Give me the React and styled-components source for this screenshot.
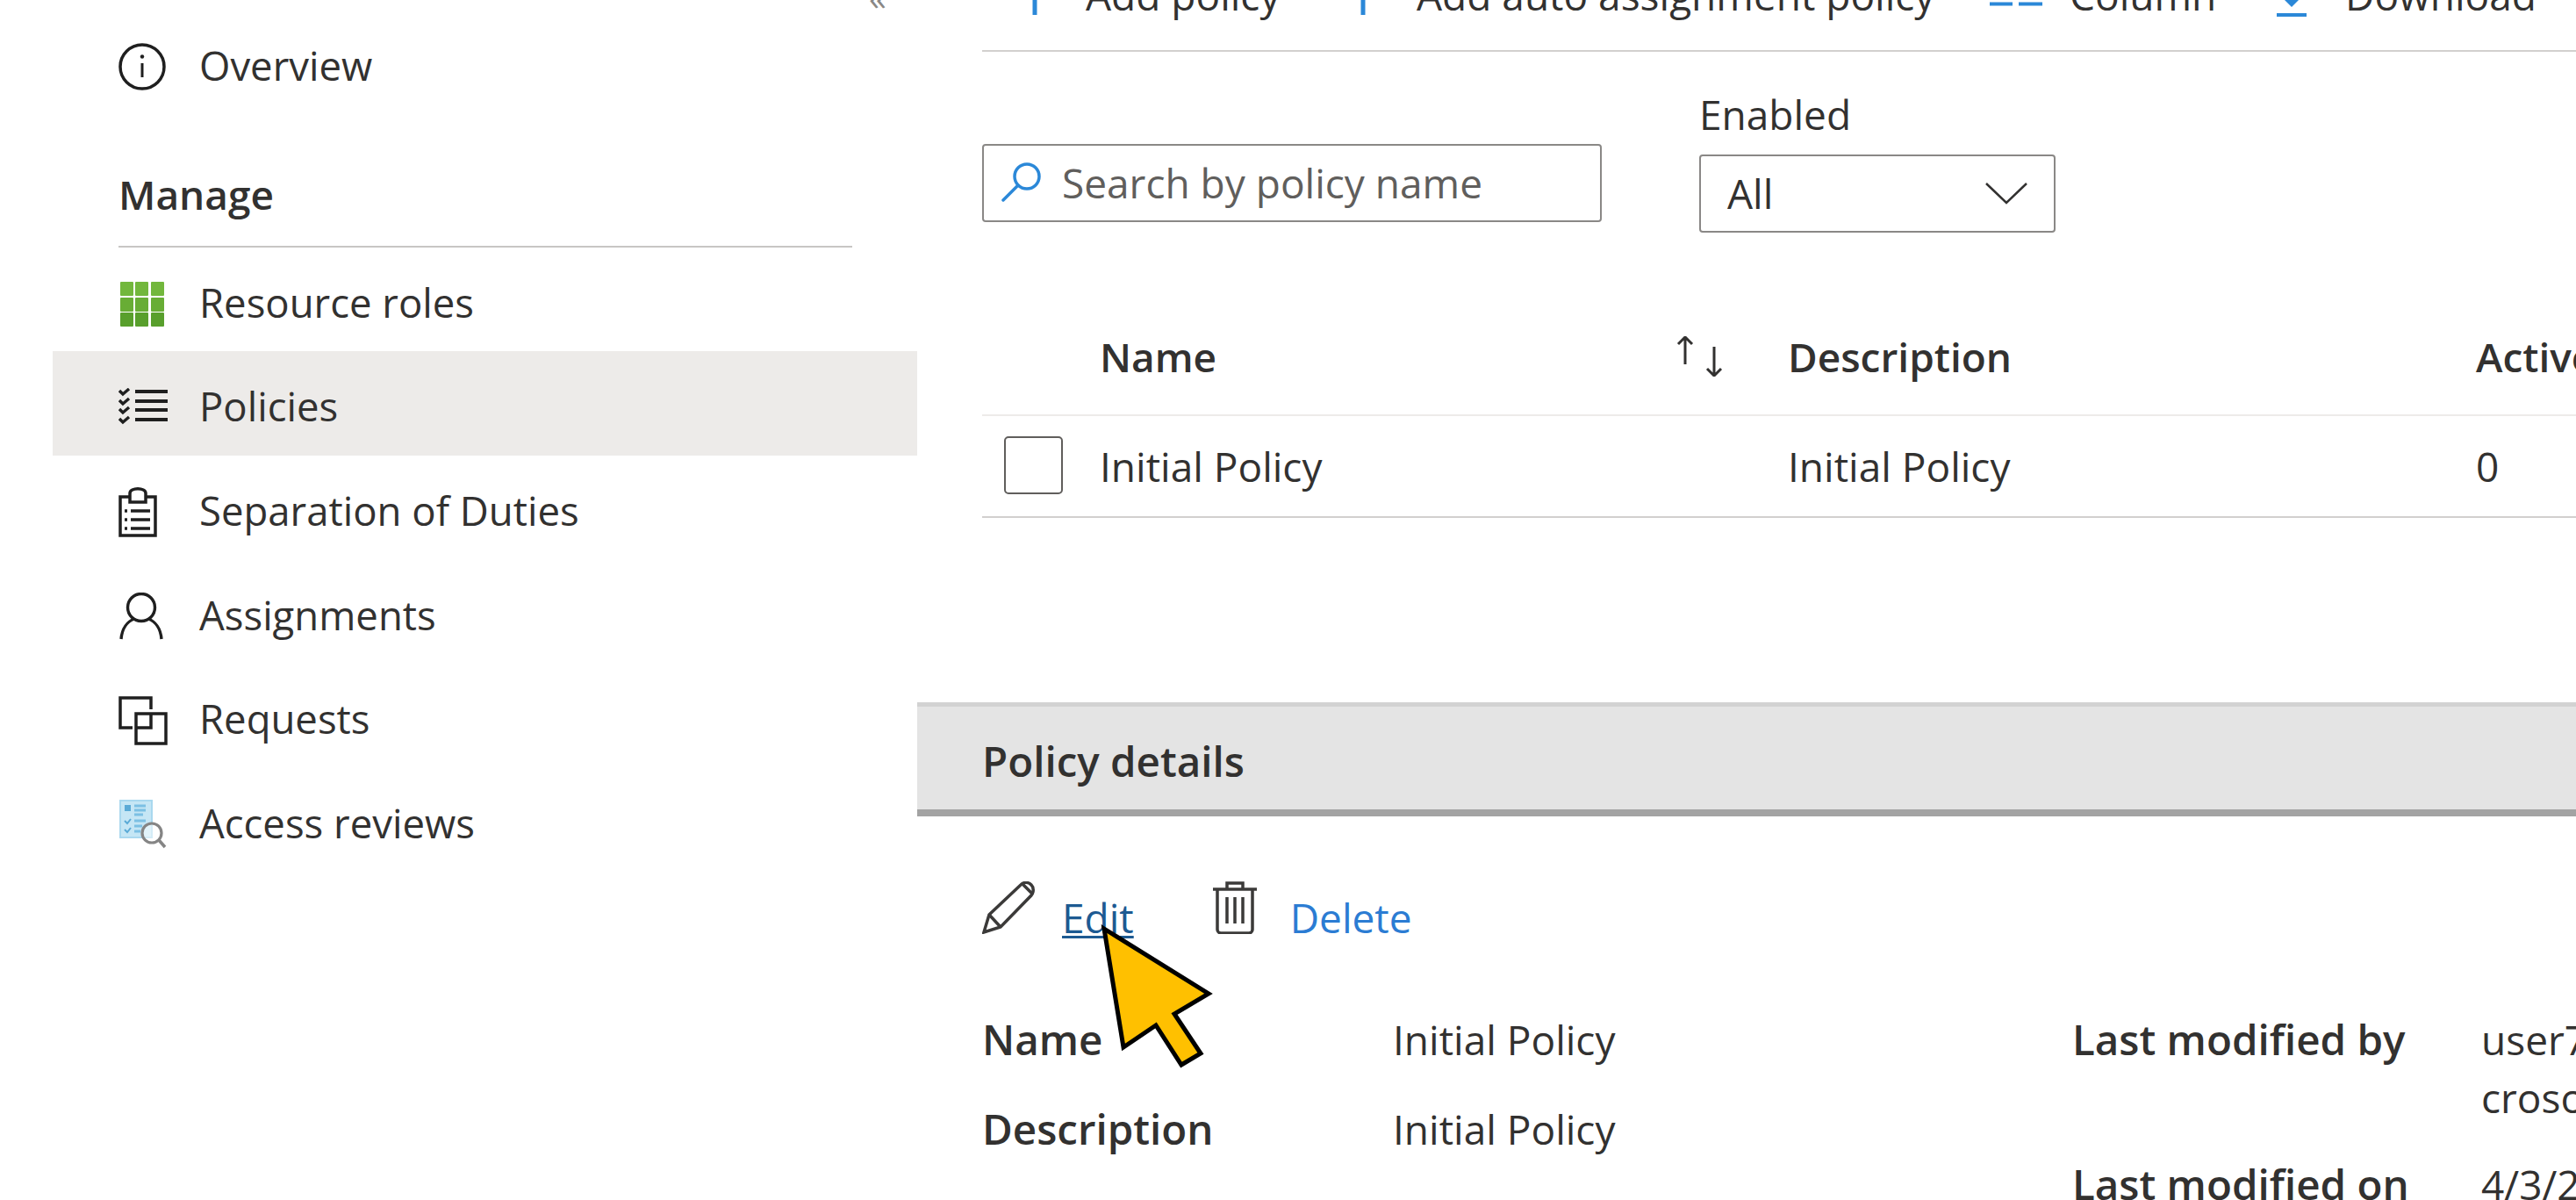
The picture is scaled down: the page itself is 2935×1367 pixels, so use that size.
import React from 'react';
import styled, { createGlobalStyle } from 'styled-components';

const GlobalStyle = createGlobalStyle`
  html, body {
    margin: 0;
    padding: 0;
    background: #fff;
    overflow: hidden;
  }
  * {
    box-sizing: border-box;
  }
  body {
    font-family: "Open Sans", "Noto Sans", "Liberation Sans", sans-serif;
    font-size: 46px;
    color: #323130;
  }
`;

const Page = styled.div`
  display: flex;
  width: 2935px;
  height: 1367px;
  overflow: hidden;
`;

const Sidebar = styled.nav`
  position: relative;
  flex: 0 0 1045px;
  padding: 12px 0 0 60px;
  font-size: 45.5px;
`;

const Collapse = styled.span`
  position: absolute;
  top: -31px;
  left: 990px;
  font-size: 40px;
  color: #8a8886;
`;

const NavItem = styled.div`
  display: flex;
  align-items: center;
  height: 118.7px;
  padding: 5px 0 0 75px;
  background: ${(p) => (p.$active ? '#edebe9' : 'transparent')};
`;

const NavIcon = styled.span`
  display: flex;
  flex: 0 0 92px;
  align-items: center;
  margin-top: 5px;

  svg {
    display: block;
  }
`;

const SectionTitle = styled.div`
  display: flex;
  align-items: center;
  height: 151px;
  margin: 0 74px 0 75px;
  border-bottom: 2px solid #c8c6c4;
  padding-top: 31px;
  font-size: 46px;
  font-weight: 600;
`;

const Main = styled.main`
  flex: 1;
  min-width: 0;
`;

const Content = styled.div`
  padding-left: 74px;
`;

const Toolbar = styled.div`
  display: flex;
  align-items: center;
  height: 129px;
  margin-top: -70px;
  border-bottom: 2px solid #d2d0ce;
  white-space: nowrap;
`;

const ToolButton = styled.span`
  display: flex;
  flex: 0 0 ${(p) => p.$width}px;
  align-items: center;
`;

const ToolIcon = styled.svg`
  flex: 0 0 auto;
  margin-right: ${(p) => p.$gap}px;
  overflow: visible;
`;

const FilterRow = styled.div`
  display: flex;
  align-items: flex-start;
  gap: 111px;
  padding-top: 50px;
`;

const SearchBox = styled.div`
  display: flex;
  align-items: center;
  width: 706px;
  height: 89px;
  margin-top: 55px;
  padding: 0 0 2px 20px;
  border: 2px solid #8a8886;
  border-radius: 4px;
  color: #605e5c;
`;

const SearchIcon = styled.svg`
  flex: 0 0 auto;
  margin-right: 23px;
`;

const FilterField = styled.div`
  display: flex;
  flex-direction: column;
`;

const FieldLabel = styled.label`
  height: 67px;
  line-height: 42px;
`;

const Select = styled.div`
  display: flex;
  align-items: center;
  justify-content: space-between;
  width: 406px;
  height: 89px;
  padding: 0 30px 2px;
  border: 2px solid #8a8886;
  border-radius: 4px;
`;

const Table = styled.div`
  margin-top: 84px;
`;

const TableRow = styled.div`
  display: grid;
  grid-template-columns: 134px 654px 130px 784px 1fr;
  align-items: center;
  height: ${(p) => p.$height}px;
  padding-bottom: ${(p) => (p.$head ? 10 : 0)}px;
  border-bottom: 2px solid ${(p) => p.$line};
  font-weight: ${(p) => (p.$head ? 600 : 400)};
  white-space: nowrap;
`;

const SortIcon = styled.svg`
  margin-left: -1px;
`;

const Checkbox = styled.span`
  display: block;
  width: 67px;
  height: 66px;
  margin: -2px 0 0 25px;
  border: 2px solid #605e5c;
  border-radius: 5px;
`;

const DetailsBar = styled.div`
  display: flex;
  align-items: center;
  height: 130px;
  margin-top: 210px;
  padding: 5px 0 0 74px;
  background: #e4e4e4;
  border-top: 5px solid #d2d2d2;
  border-bottom: 8px solid #a3a3a3;
  font-size: 47.5px;
  font-weight: 600;
`;

const Actions = styled.div`
  display: flex;
  align-items: flex-start;
  padding-top: 74px;
`;

const ActionLink = styled.a`
  margin: ${(p) => p.$margin};
  line-height: 60px;
  color: ${(p) => p.$color};
  text-decoration: ${(p) => (p.$underline ? 'underline' : 'none')};
  text-underline-offset: 3px;
  text-decoration-thickness: 3px;
`;

const ActionIcon = styled.svg`
  flex: 0 0 auto;
`;

const Details = styled.div`
  display: grid;
  grid-template-columns: 468px 774px 466px 1fr;
  margin-top: 76px;
  line-height: 66px;
  white-space: nowrap;
`;

const DetailColumn = styled.div`
  display: flex;
  flex-direction: column;
`;

const DetailLabel = styled.div`
  height: ${(p) => p.$height}px;
  font-size: 47.5px;
  font-weight: 600;
`;

const DetailValue = styled.div`
  height: ${(p) => p.$height}px;
`;

const Pointer = styled.svg`
  position: absolute;
  top: 1050px;
  left: 1250px;
  overflow: visible;
`;

const Icon = ({ children, w = 60, h = 60 }) => (
  <svg width={w} height={h} viewBox={`0 0 ${w} ${h}`} fill="none" stroke="#1f1f1f" strokeWidth="4">
    {children}
  </svg>
);

const InfoIcon = () => (
  <Icon w={54} h={54}>
    <circle cx="27" cy="27" r="25" strokeWidth="3.5" />
    <path d="M27 23v16" strokeWidth="3" />
    <circle cx="27" cy="15.5" r="2.2" fill="#1f1f1f" stroke="none" />
  </Icon>
);

// green grid, three by three
const RolesIcon = () => {
  const cells = [];
  [0, 18, 35].forEach((y) => {
    [2, 19, 37].forEach((x) => {
      cells.push(<rect key={`${x}-${y}`} x={x} y={y} width="15" height="16" rx="1" fill={y === 35 ? '#589f2c' : y === 18 ? '#68ad35' : '#72b73c'} />);
    });
  });
  return (
    <svg width="52" height="51" viewBox="0 0 52 51">
      {cells}
    </svg>
  );
};

const PoliciesIcon = () => (
  <Icon w={56} h={46}>
    <path d="M19 4h37M19 15h37M19 25h37M19 36h37" strokeWidth="4" />
    <path d="M1 3l4 4 7-6M1 14l4 4 7-6M1 24l4 4 7-6M1 35l4 4 7-6" strokeWidth="3.4" />
  </Icon>
);

const SeparationIcon = () => (
  <Icon w={44} h={58}>
    <path d="M13 12H2v44h40V12H31V8c0-7-18-7-18 0v4zM13 12v6h18v-6" strokeWidth="3.5" />
    <path d="M14 28h22M14 38h22M14 48h22" strokeWidth="3.5" />
    <path d="M7 28h3M7 38h3M7 48h3" strokeWidth="3.5" />
  </Icon>
);

const PersonIcon = () => (
  <Icon w={52} h={54}>
    <circle cx="26" cy="17" r="15.5" strokeWidth="3.4" />
    <path d="M3 53c1-12 7-20 15-23M49 53c-1-12-7-20-15-23" strokeWidth="3.4" />
  </Icon>
);

const RequestsIcon = () => (
  <Icon w={56} h={56}>
    <path d="M37 15V2H2v34h14" strokeWidth="3.5" />
    <rect x="20" y="20" width="34" height="34" strokeWidth="3.5" />
    <path d="M37 20v16H20" strokeWidth="3.5" />
  </Icon>
);

const ReviewsIcon = () => (
  <svg width="56" height="56" viewBox="0 0 56 56" fill="none">
    <rect x="1" y="0" width="38" height="44" fill="#a9d8ef" />
    <rect x="3" y="2" width="34" height="40" fill="#c5e6f5" />
    <rect x="7" y="6" width="7" height="7" fill="#5aaad6" />
    <path d="M18 7h13M18 12h13M18 17h10M18 24h13M18 30h9M18 36h7" stroke="#7cc0e4" strokeWidth="3" />
    <path d="M7 24l3 3 4-5M7 34l3 3 4-5" stroke="#5aaad6" strokeWidth="2" />
    <circle cx="38" cy="38" r="11" fill="#fff" fillOpacity="0.5" stroke="#858585" strokeWidth="3.2" />
    <path d="M46 46l7 8" stroke="#858585" strokeWidth="3.5" />
  </svg>
);

const navItems = [
  ['Resource roles', <RolesIcon />],
  ['Policies', <PoliciesIcon />, true],
  ['Separation of Duties', <SeparationIcon />],
  ['Assignments', <PersonIcon />],
  ['Requests', <RequestsIcon />],
  ['Access reviews', <ReviewsIcon />],
];

// only the lower end of the plus is inside the picture
const PlusStem = ({ gap }) => (
  <ToolIcon width="118" height="128" viewBox="0 0 118 128" $gap={gap}>
    <path d="M60 0v87" stroke="#2b88d8" strokeWidth="5" />
  </ToolIcon>
);

const App = () => (
  <>
    <GlobalStyle />
    <Page>
      <Sidebar>
        <Collapse>«</Collapse>
        <NavItem>
          <NavIcon>
            <InfoIcon />
          </NavIcon>
          Overview
        </NavItem>
        <SectionTitle>Manage</SectionTitle>
        {navItems.map(([label, icon, active]) => (
          <NavItem key={label} $active={active}>
            <NavIcon>{icon}</NavIcon>
            {label}
          </NavItem>
        ))}
      </Sidebar>
      <Main>
        <Content>
          <Toolbar>
            <ToolButton $width={374}>
              <PlusStem gap={0} />
              Add policy
            </ToolButton>
            <ToolButton $width={774}>
              <PlusStem gap={3} />
              Add auto assignment policy
            </ToolButton>
            <ToolButton $width={327}>
              <ToolIcon width="60" height="20" viewBox="0 0 60 20" $gap={31}>
                <path d="M0 20.5h26M33 20.5h27" stroke="#2b88d8" strokeWidth="4" />
              </ToolIcon>
              Column
            </ToolButton>
            <ToolButton $width={400}>
              <ToolIcon width="34" height="40" viewBox="0 0 34 40" $gap={44}>
                <path d="M7 24h20L17 34z" fill="#2b88d8" />
                <path d="M0 43h34" stroke="#2b88d8" strokeWidth="4" />
              </ToolIcon>
              Download
            </ToolButton>
          </Toolbar>
          <FilterRow>
            <SearchBox>
              <SearchIcon width="46" height="46" viewBox="0 0 46 46" fill="none" stroke="#2b88d8" strokeWidth="3.5">
                <circle cx="29" cy="16" r="14" />
                <path d="M19 26L2 43" strokeLinecap="round" />
              </SearchIcon>
              Search by policy name
            </SearchBox>
            <FilterField>
              <FieldLabel>Enabled</FieldLabel>
              <Select>
                All
                <svg width="48" height="26" viewBox="0 0 48 26" fill="none" stroke="#323130" strokeWidth="2.5">
                  <path d="M1 2l23 22L47 2" />
                </svg>
              </Select>
            </FilterField>
          </FilterRow>
          <Table>
            <TableRow $head $height={125} $line="#edebe9">
              <span />
              <span>Name</span>
              <SortIcon width="62" height="46" viewBox="0 0 62 46" fill="none" stroke="#323130" strokeWidth="3">
                <path d="M14 32V1M6 9l8-8 8 8M47 12v33M39 37l8 8 8-8" />
              </SortIcon>
              <span>Description</span>
              <span>Active</span>
            </TableRow>
            <TableRow $height={116} $line="#d2d0ce">
              <Checkbox />
              <span>Initial Policy</span>
              <span />
              <span>Initial Policy</span>
              <span>0</span>
            </TableRow>
          </Table>
        </Content>
        <DetailsBar>Policy details</DetailsBar>
        <Content>
          <Actions>
            <ActionIcon width="60" height="60" viewBox="0 0 60 60" fill="none" stroke="#3b3a39" strokeWidth="3.5">
              <path d="M2 58l6-20L44 4c4-4 9-3 12 0s3 8 0 12L21 52z" />
              <path d="M8 38l13 14M46 3l12 12" />
            </ActionIcon>
            <ActionLink $margin="11px 90px 0 31px" $color="#1d5a92" $underline>
              Edit
            </ActionLink>
            <ActionIcon width="50" height="60" viewBox="0 0 50 60" fill="none" stroke="#3b3a39" strokeWidth="3.5">
              <path d="M0 9h50M16 9V2h18v7M5 9v46c0 2 2 4 4 4h32c2 0 4-2 4-4V9" />
              <path d="M16 18v30M25 18v30M34 18v30" />
            </ActionIcon>
            <ActionLink $margin="11px 0 0 38px" $color="#2b7cd3">
              Delete
            </ActionLink>
          </Actions>
          <Details>
            <DetailColumn>
              <DetailLabel $height={102}>Name</DetailLabel>
              <DetailLabel $height={66}>Description</DetailLabel>
            </DetailColumn>
            <DetailColumn>
              <DetailValue $height={102}>Initial Policy</DetailValue>
              <DetailValue $height={66}>Initial Policy</DetailValue>
            </DetailColumn>
            <DetailColumn>
              <DetailLabel $height={165}>Last modified by</DetailLabel>
              <DetailLabel $height={66}>Last modified on</DetailLabel>
            </DetailColumn>
            <DetailColumn>
              <DetailValue $height={66}>user7@contoso.onmi</DetailValue>
              <DetailValue $height={99}>crosoft.com</DetailValue>
              <DetailValue $height={66}>4/3/2023, 9:41:07 AM</DetailValue>
            </DetailColumn>
          </Details>
        </Content>
      </Main>
    </Page>
    <Pointer width="130" height="170" viewBox="0 0 130 170">
      <path d="M8 8l119 74-39 23 30 45-22 13-29-45-37 25z" fill="#ffc000" stroke="#000" strokeWidth="5" strokeLinejoin="miter" />
    </Pointer>
  </>
);

export default App;
